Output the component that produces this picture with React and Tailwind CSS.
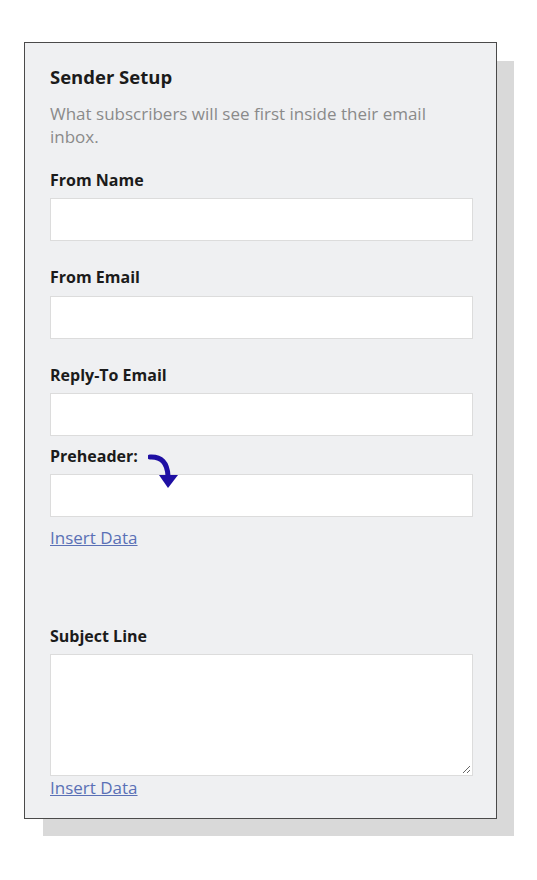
import React from "react";

function Label({ children, className = "" }) {
  return (
    <div className={"text-[16px] leading-[24px] font-bold text-[#1b1b1b] " + className}>{children}</div>
  );
}

function Input({ className = "" }) {
  return <div className={"h-[43px] bg-white border border-[#dcdcdc] " + className} />;
}

export default function App() {
  return (
    <div className="w-[537px] h-[880px] bg-white pt-[42px] pl-[24px]" style={{ fontFamily: "'Open Sans', Lato, sans-serif" }}>
      <div className="w-[473px] h-[777px] bg-[#eff0f2] border border-[#4a4a4a] shadow-[18px_18px_0_-1px_#d9d9d9] pl-[25px] pr-[23px] pt-[22px] flex flex-col">
        <div className="text-[18.5px] leading-[24px] font-bold text-[#1b1b1b]">Sender Setup</div>
        <div className="mt-[13px] text-[17px] leading-[23px] text-[#8a8a8a]">
          What subscribers will see first inside their email inbox.
        </div>
        <Label className="mt-[20px]">From Name</Label>
        <Input className="mt-[6px]" />
        <Label className="mt-[24px]">From Email</Label>
        <Input className="mt-[7px]" />
        <Label className="mt-[24px]">Reply-To Email</Label>
        <Input className="mt-[6px]" />
        <div className="relative mt-[8px]">
          <Label>Preheader:</Label>
          <svg className="absolute left-[98px] top-[6px]" width="34" height="42" viewBox="0 0 34 42">
            <path d="M2 7 Q19 6 20 26" fill="none" stroke="#1e0fa3" strokeWidth="5" strokeLinecap="round" />
            <polygon points="11,25 30,25 20,38" fill="#1e0fa3" />
          </svg>
        </div>
        <Input className="mt-[6px]" />
        <a href="#" className="mt-[9px] w-fit text-[17px] leading-[24px] text-[#5a70b6] underline">Insert Data</a>
        <Label className="mt-[74px]">Subject Line</Label>
        <div className="relative mt-[6px] h-[122px] bg-white border border-[#dcdcdc]">
          <svg className="absolute right-[1px] bottom-[1px]" width="9" height="9" viewBox="0 0 9 9">
            <path d="M8 1 L1 8 M8 5 L5 8" stroke="#666" strokeWidth="1" />
          </svg>
        </div>
        <a href="#" className="w-fit text-[17px] leading-[24px] text-[#5a70b6] underline">Insert Data</a>
      </div>
    </div>
  );
}
